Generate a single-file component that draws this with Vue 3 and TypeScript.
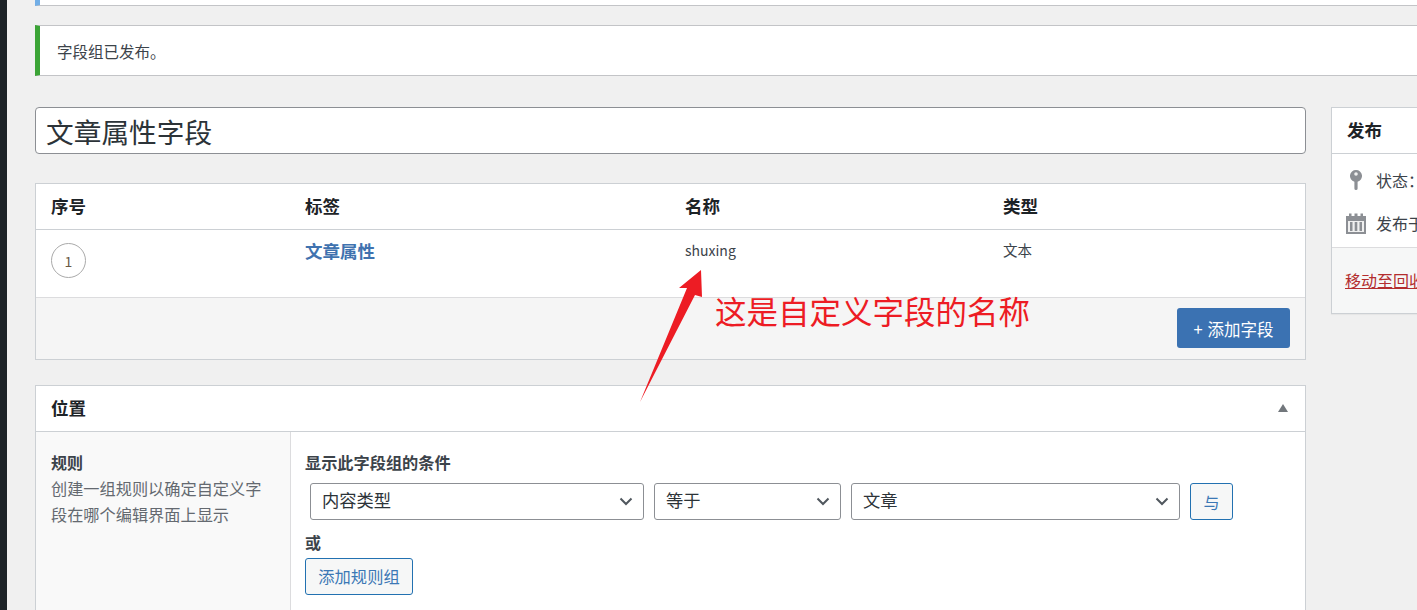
<template>
  <div class="page">
    <div class="adminbar"></div>
    <div class="content">
      <div class="notice notice-info"></div>
      <div class="notice notice-success">字段组已发布。</div>

      <div class="columns">
        <div class="main">
          <div class="title-input">文章属性字段</div>

          <section class="box fields">
            <div class="field-row field-head">
              <span v-for="col in columns" :key="col">{{ col }}</span>
            </div>
            <div class="field-row field-item">
              <span><i class="order">1</i></span>
              <a class="field-label">文章属性</a>
              <span class="field-name">shuxing</span>
              <span class="field-type">文本</span>
            </div>
            <div class="fields-foot">
              <button class="btn-primary">+ 添加字段</button>
            </div>
          </section>

          <section class="box location">
            <header class="location-head">
              <h2>位置</h2>
              <svg class="toggle" width="10" height="8" viewBox="0 0 10 8"><path d="M5 0l5 8H0z" fill="#72777c" /></svg>
            </header>
            <div class="location-body">
              <aside class="location-side">
                <strong>规则</strong>
                <p>创建一组规则以确定自定义字段在哪个编辑界面上显示</p>
              </aside>
              <div class="location-rules">
                <label>显示此字段组的条件</label>
                <div class="rule">
                  <div v-for="s in selects" :key="s.text" class="select" :class="s.cls">
                    <span>{{ s.text }}</span>
                    <svg width="14" height="9" viewBox="0 0 14 9"><path d="M1.500 1.500L7 7l5.500-5.500" fill="none" stroke="#50575e" stroke-width="2" /></svg>
                  </div>
                  <button class="btn-outline btn-and">与</button>
                </div>
                <div class="or">或</div>
                <button class="btn-outline btn-group">添加规则组</button>
              </div>
            </div>
          </section>
        </div>

        <aside class="box publish">
          <h2>发布</h2>
          <div class="publish-body">
            <div class="publish-line">
              <svg width="14" height="22" viewBox="0 0 14 22"><path d="M7 1a6 6 0 0 1 1.600 11.800V19.500a1.600 1.600 0 0 1-3.200 0V12.800A6 6 0 0 1 7 1z" fill="#8c8f94" /><circle cx="7" cy="5" r="1.800" fill="#f0f0f0" /></svg>
              <span>状态：</span>
            </div>
            <div class="publish-line">
              <svg width="22" height="22" viewBox="0 0 22 22">
                <path d="M1 4h3V1.500h2.500V4h3V1.500h3V4h3V1.500h2.500V4H21v18H1z" fill="#8c8f94" />
                <path d="M3 9h16v11H3z" fill="#f0f0f0" />
                <path d="M5 10h2.500v9H5zM9.700 10h2.600v9H9.700zM14.500 10H17v9h-2.500z" fill="#8c8f94" />
              </svg>
              <span>发布于</span>
            </div>
          </div>
          <div class="publish-foot"><a>移动至回收站</a></div>
        </aside>
      </div>
    </div>

    <!-- 截图上的红色标注 -->
    <svg class="arrow" width="70" height="140" viewBox="0 0 70 140">
      <path d="M62 0L63 27 56 25 1 132 48 18 40 18z" fill="#ed1c24" />
    </svg>
    <div class="note">这是自定义字段的名称</div>
  </div>
</template>

<script setup lang="ts">
const columns = ['序号', '标签', '名称', '类型']

const selects = [
  { text: '内容类型', cls: 'sel-type' },
  { text: '等于', cls: 'sel-op' },
  { text: '文章', cls: 'sel-value' },
]
</script>

<style>
html,
body {
  margin: 0;
  background: #f0f0f0;
}
</style>

<style scoped>
.page {
  position: relative;
  display: flex;
  width: 1417px;
  height: 610px;
  overflow: hidden;
  background: #f0f0f0;
  color: #3c434a;
  font-family: "Noto Sans CJK SC", "Noto Sans", sans-serif;
  font-size: 16px;
}

.adminbar {
  flex: none;
  width: 7px;
  background: #1d2327;
}

.content {
  flex: none;
  width: 1500px;
  padding-left: 28px;
}

.notice {
  box-sizing: border-box;
  background: #fff;
  border-left: 5px solid #72aee6;
  border-bottom: 1px solid #c3c4c7;
}

.notice-info {
  height: 6px;
}

.notice-success {
  height: 51px;
  margin-top: 19px;
  padding-left: 17px;
  border-left-color: #3ba436;
  border-top: 1px solid #c3c4c7;
  font-size: 15.500px;
  line-height: 50px;
}

.columns {
  display: flex;
  gap: 25px;
  margin-top: 31px;
}

.main {
  flex: none;
  width: 1271px;
}

.title-input {
  box-sizing: border-box;
  height: 47px;
  padding-left: 10px;
  background: #fff;
  border: 1px solid #8c8f94;
  border-radius: 4px;
  color: #2c3338;
  font-size: 27.700px;
  line-height: 47px;
}

.box {
  box-sizing: border-box;
  background: #fff;
  border: 1px solid #ccd0d4;
}

.fields {
  height: 177px;
  margin-top: 29px;
}

.field-row {
  display: grid;
  grid-template-columns: 254px 380px 318px 1fr;
  padding-left: 15px;
}

.field-head {
  height: 46px;
  border-bottom: 1px solid #ccd0d4;
  box-sizing: border-box;
  color: #1d2327;
  font-size: 17.500px;
  font-weight: 700;
  line-height: 44px;
}

.field-item {
  box-sizing: border-box;
  height: 68px;
  border-bottom: 1px solid #dcdcde;
  font-size: 14.500px;
}

.order {
  display: block;
  box-sizing: border-box;
  width: 35px;
  height: 35px;
  margin-top: 13px;
  border: 1px solid #aaa;
  border-radius: 50%;
  color: #6b5a45;
  font-style: normal;
  font-size: 14px;
  line-height: 35px;
  text-align: center;
}

.field-label {
  padding-top: 7px;
  color: #3f72af;
  font-size: 17.500px;
  font-weight: 700;
  line-height: 27px;
}

.field-name,
.field-type {
  padding-top: 8px;
  line-height: 24px;
}

.field-name {
  font-size: 14px;
}

.fields-foot {
  display: flex;
  justify-content: flex-end;
  height: 61px;
  padding: 10px 15px 0 0;
  box-sizing: border-box;
  background: #f5f5f5;
}

.btn-primary {
  width: 113px;
  height: 40px;
  padding: 2px 0 0;
  background: #3b72b2;
  border: 0;
  border-radius: 3px;
  color: #fff;
  font: inherit;
  font-size: 16.500px;
  word-spacing: 1px;
}

.location {
  height: 300px;
  margin-top: 25px;
}

.location-head {
  display: flex;
  align-items: center;
  justify-content: space-between;
  box-sizing: border-box;
  height: 46px;
  padding: 0 17px 2px 15px;
  border-bottom: 1px solid #ccd0d4;
}

.location-head h2 {
  margin: 0;
  color: #1d2327;
  font-size: 17.500px;
  font-weight: 700;
}

.location-body {
  display: flex;
  height: 100%;
}

.location-side {
  flex: none;
  box-sizing: border-box;
  width: 255px;
  padding: 18px 25px 0 15px;
  background: #f9f9f9;
  border-right: 1px solid #dcdcde;
}

.location-side strong {
  display: block;
  color: #3c434a;
  font-size: 16px;
  line-height: 25px;
}

.location-side p {
  margin: 0;
  color: #646970;
  font-size: 16.200px;
  line-height: 26px;
}

.location-rules {
  flex: 1;
  padding: 18px 14px 0 14px;
}

.location-rules label {
  display: block;
  color: #3c434a;
  font-size: 16.200px;
  font-weight: 700;
  line-height: 25px;
}

.rule {
  display: flex;
  gap: 10px;
  margin: 8px 0 0 5px;
}

.select {
  display: flex;
  align-items: center;
  justify-content: space-between;
  box-sizing: border-box;
  height: 37px;
  padding: 0 10px 0 11px;
  background: #fff;
  border: 1px solid #8c8f94;
  border-radius: 3px;
  color: #2c3338;
  font-size: 17.300px;
}

.select span {
  margin-top: -4px;
}

.sel-type {
  width: 334px;
}

.sel-op {
  width: 187px;
}

.sel-value {
  width: 329px;
}

.btn-outline {
  box-sizing: border-box;
  padding: 0;
  background: #f6f7f7;
  border: 1px solid #2271b1;
  border-radius: 3px;
  color: #3b78b5;
  font: inherit;
  font-size: 16px;
}

.btn-and {
  width: 43px;
  height: 37px;
}

.btn-group {
  display: block;
  width: 108px;
  height: 37px;
  margin-top: 2px;
  padding: 0 0 2px;
  font-size: 16.300px;
}

.or {
  margin-top: 9px;
  color: #3c434a;
  font-size: 16px;
  font-weight: 700;
  line-height: 27px;
}

.publish {
  flex: none;
  width: 280px;
  height: 207px;
  box-shadow: 0 1px 1px rgba(0, 0, 0, 0.04);
}

.publish h2 {
  box-sizing: border-box;
  height: 46px;
  margin: 0;
  padding-left: 15px;
  border-bottom: 1px solid #ccd0d4;
  color: #1d2327;
  font-size: 17.500px;
  font-weight: 700;
  line-height: 43px;
}

.publish-body {
  box-sizing: border-box;
  height: 94px;
  padding-top: 15px;
  border-bottom: 1px solid #dcdcde;
}

.publish-line {
  display: grid;
  grid-template-columns: 20px auto;
  justify-content: start;
  align-items: center;
  column-gap: 10px;
  height: 22px;
  margin: 0 0 21px 14px;
  font-size: 16px;
  line-height: 20px;
  white-space: nowrap;
}

.publish-line svg {
  justify-self: center;
}

.publish-foot {
  box-sizing: border-box;
  height: 65px;
  padding: 19px 0 0 13px;
  background: #f6f7f7;
  font-size: 16px;
  line-height: 26px;
}

.publish-foot a {
  color: #b32d2e;
  text-decoration: underline;
}

.arrow {
  position: absolute;
  left: 639px;
  top: 270px;
}

.note {
  position: absolute;
  left: 715px;
  top: 289px;
  color: #ed1c24;
  font-size: 31.500px;
  line-height: 42px;
  white-space: nowrap;
}
</style>
